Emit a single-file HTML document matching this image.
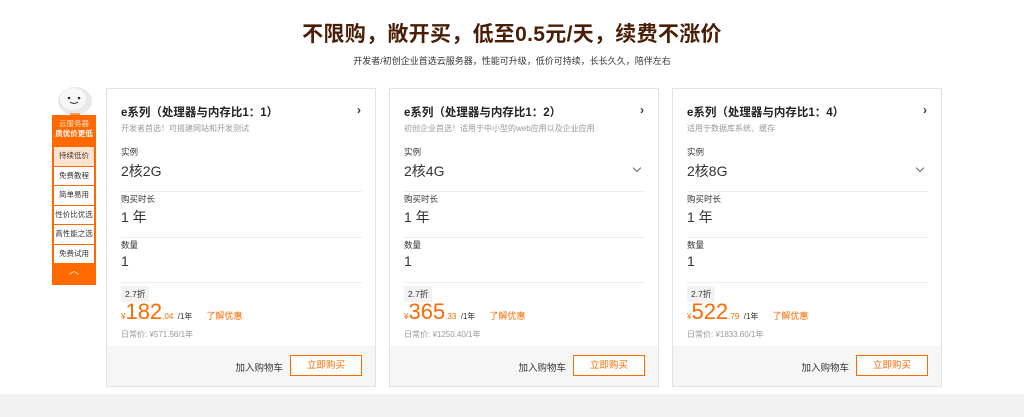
<!DOCTYPE html>
<html><head><meta charset="utf-8"><style>
*{margin:0;padding:0;box-sizing:border-box}
body{width:1024px;height:417px;background:#fff;font-family:"Liberation Sans","Noto Sans CJK SC",sans-serif;position:relative;overflow:hidden;color:#333}
.t{position:absolute;top:18px;left:0;width:1024px;text-align:center;font-size:21px;font-weight:bold;color:#4a1e06;letter-spacing:0.3px}
.st{position:absolute;top:54px;left:0;width:1024px;text-align:center;font-size:9px;color:#333}
.bot{position:absolute;left:0;top:394px;width:1024px;height:23px;background:#f2f2f2}
.card{position:absolute;top:88px;width:270px;height:299px;border:1px solid #e3e3e3;background:#fff}
.card h3{position:absolute;left:14px;top:15px;font-size:11.5px;font-weight:bold;color:#222}
.card .ar{position:absolute;right:14px;top:14px;font-size:12px;font-weight:bold;color:#333}
.card .d{position:absolute;left:14px;top:34px;font-size:8px;color:#999}
.lab{position:absolute;left:14px;font-size:8.5px;color:#333}
.val{position:absolute;left:14px;font-size:14px;color:#333}
.ln{position:absolute;left:14px;width:241px;height:1px;background:#eee}
.chev{position:absolute;right:18px;top:76px;width:6px;height:6px;border-right:1px solid #666;border-bottom:1px solid #666;transform:rotate(45deg)}
.tag{position:absolute;left:14px;top:197px;background:#f2f2f2;font-size:8.5px;padding:2px 4px;color:#333}
.pr{position:absolute;left:14px;top:210px;color:#ff6a00;white-space:nowrap}
.pr .y{font-size:8px}.pr .b{font-size:22px}.pr .s{font-size:8px}.pr .u{font-size:8px;color:#333}.pr .k{font-size:9px;margin-left:14px}
.og{position:absolute;left:14px;top:240px;font-size:8px;color:#999}
.ft{position:absolute;left:0;bottom:0;width:268px;height:40px;background:#f6f6f6}
.cart{position:absolute;right:92px;top:14px;font-size:9.5px;color:#333}
.buy{position:absolute;right:13px;top:9px;width:72px;height:21px;border:1px solid #ff6a00;background:#fff;color:#ff6a00;font-size:9.5px;text-align:center;line-height:19px}
.side{position:absolute;left:52px;top:115px;width:44px;height:170px;background:#ff6a00}
.side .h{color:#fff;font-size:7.5px;text-align:center;line-height:10px;padding-top:4px;height:32px}
.side .i{background:#fff;margin:0 2px 1px;height:18.5px;font-size:7.5px;text-align:center;line-height:18.5px;color:#333}
.side .i.a{background:#ffe4d0}
</style></head><body>
<div class="t">不限购，敞开买，低至0.5元/天，续费不涨价</div>
<div class="st">开发者/初创企业首选云服务器，性能可升级，低价可持续，长长久久，陪伴左右</div>

<svg style="position:absolute;left:55px;top:83px" width="40" height="34" viewBox="0 0 40 34"><ellipse cx="20" cy="18" rx="17" ry="14" fill="#e8e8e8"/><ellipse cx="18" cy="16" rx="13" ry="11" fill="#f7f7f7"/><circle cx="14" cy="15" r="1.3" fill="#333"/><circle cx="24" cy="15" r="1.3" fill="#333"/><path d="M15 19 Q19 22 23 19" stroke="#333" fill="none" stroke-width="1"/><rect x="15" y="30" width="10" height="4" fill="#f0a050"/></svg>
<div class="side">
<div class="h"><span style="opacity:.8">云服务器</span><br><b>质优价更低</b></div>
<div class="i a">持续低价</div><div class="i">免费教程</div><div class="i">简单易用</div><div class="i">性价比优选</div><div class="i">高性能之选</div><div class="i">免费试用</div>
<div style="color:#fff;text-align:center;font-size:10px;line-height:16px">︿</div>
</div>

<div class="card" style="left:106px">
<h3>e系列（处理器与内存比1：1）</h3><div class="ar">›</div><div class="d">开发者首选！可搭建网站和开发测试</div>
<div class="lab" style="top:57px">实例</div><div class="val" style="top:72px">2核2G</div><div class="ln" style="top:102px"></div>
<div class="lab" style="top:104px">购买时长</div><div class="val" style="top:118px">1 年</div><div class="ln" style="top:148px"></div>
<div class="lab" style="top:150px">数量</div><div class="val" style="top:164px">1</div><div class="ln" style="top:193px"></div>
<div class="tag">2.7折</div>
<div class="pr"><span class="y">¥</span><span class="b">182</span><span class="s">.04</span> <span class="u">/1年</span><span class="k">了解优惠</span></div>
<div class="og">日常价: ¥571.56/1年</div>
<div class="ft"><div class="cart">加入购物车</div><div class="buy">立即购买</div></div>
</div>

<div class="card" style="left:389px">
<h3>e系列（处理器与内存比1：2）</h3><div class="ar">›</div><div class="d">初创企业首选！适用于中小型的web应用以及企业应用</div>
<div class="lab" style="top:57px">实例</div><div class="val" style="top:72px">2核4G</div><div class="chev"></div><div class="ln" style="top:102px"></div>
<div class="lab" style="top:104px">购买时长</div><div class="val" style="top:118px">1 年</div><div class="ln" style="top:148px"></div>
<div class="lab" style="top:150px">数量</div><div class="val" style="top:164px">1</div><div class="ln" style="top:193px"></div>
<div class="tag">2.7折</div>
<div class="pr"><span class="y">¥</span><span class="b">365</span><span class="s">.33</span> <span class="u">/1年</span><span class="k">了解优惠</span></div>
<div class="og">日常价: ¥1250.40/1年</div>
<div class="ft"><div class="cart">加入购物车</div><div class="buy">立即购买</div></div>
</div>

<div class="card" style="left:672px">
<h3>e系列（处理器与内存比1：4）</h3><div class="ar">›</div><div class="d">适用于数据库系统、缓存</div>
<div class="lab" style="top:57px">实例</div><div class="val" style="top:72px">2核8G</div><div class="chev"></div><div class="ln" style="top:102px"></div>
<div class="lab" style="top:104px">购买时长</div><div class="val" style="top:118px">1 年</div><div class="ln" style="top:148px"></div>
<div class="lab" style="top:150px">数量</div><div class="val" style="top:164px">1</div><div class="ln" style="top:193px"></div>
<div class="tag">2.7折</div>
<div class="pr"><span class="y">¥</span><span class="b">522</span><span class="s">.79</span> <span class="u">/1年</span><span class="k">了解优惠</span></div>
<div class="og">日常价: ¥1833.60/1年</div>
<div class="ft"><div class="cart">加入购物车</div><div class="buy">立即购买</div></div>
</div>

<div class="bot"></div>
</body></html>
